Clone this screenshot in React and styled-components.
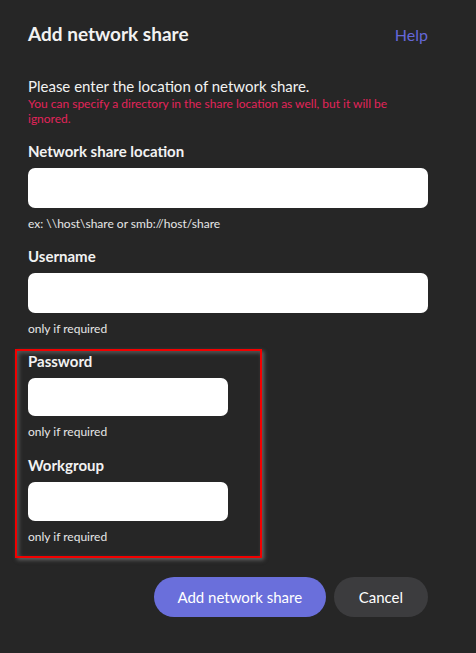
import styled, { createGlobalStyle } from "styled-components"

const GlobalStyle = createGlobalStyle`
  html, body {
    margin: 0;
    background: #262626;
  }
  body {
    font-family: Lato, "Open Sans", sans-serif;
    color: #f2f2f2;
  }
`

const Dialog = styled.div`
  width: 400px;
  padding: 22px 0 0 28px;
  display: flex;
  flex-direction: column;
`

const Header = styled.div`
  display: flex;
  justify-content: space-between;
  align-items: baseline;
`

const Title = styled.h2`
  margin: 0;
  font-size: 19px;
  line-height: 24px;
  font-weight: 700;
`

const HelpLink = styled.a`
  font-size: 16px;
  color: #6567d8;
  cursor: pointer;
`

const Intro = styled.p`
  margin: 31px 0 0;
  font-size: 15px;
  line-height: 19px;
`

const Warning = styled.p`
  margin: 0;
  font-size: 12px;
  line-height: 15px;
  color: #e3245a;
`

const Field = styled.div`
  display: flex;
  flex-direction: column;
  margin-top: ${p => p.$top ?? 15}px;
`

const Label = styled.label`
  font-size: 15px;
  font-weight: 700;
  line-height: 20px;
`

const Input = styled.input`
  box-sizing: border-box;
  margin-top: 7px;
  width: ${p => p.$width || 400}px;
  height: ${p => p.$height || 40}px;
  border: none;
  border-radius: 7px;
  background: #fff;
  outline: none;
`

const Hint = styled.span`
  margin-top: 8px;
  font-size: 12px;
  line-height: 15px;
  color: #e6e6e6;
`

const Highlight = styled.div`
  margin: 13px 0 0 -13px;
  width: 247px;
  box-sizing: border-box;
  padding: 0 32px 12px 11px;
  border: 2px solid #f20000;
  box-shadow: 2px 2px 4px rgba(150, 150, 150, 0.55),
    inset 2px 2px 4px rgba(150, 150, 150, 0.45);
`

const Actions = styled.div`
  display: flex;
  justify-content: flex-end;
  gap: 8px;
  margin-top: 19px;
`

const Button = styled.button`
  height: 40px;
  padding: 0 ${p => p.$pad || 24}px;
  border: none;
  border-radius: 20px;
  font-family: Lato, "Open Sans", sans-serif;
  font-size: 15px;
  color: #fff;
  background: ${p => (p.$primary ? "#6a6fdb" : "#3c3c3e")};
  cursor: pointer;
`

export default function App() {
  return (
    <>
      <GlobalStyle />
      <Dialog>
        <Header>
          <Title>Add network share</Title>
          <HelpLink>Help</HelpLink>
        </Header>
        <Intro>Please enter the location of network share.</Intro>
        <Warning>
          You can specify a directory in the share location as well, but it will be ignored.
        </Warning>
        <Field>
          <Label>Network share location</Label>
          <Input />
          <Hint>ex: \\host\share or smb://host/share</Hint>
        </Field>
        <Field>
          <Label>Username</Label>
          <Input />
          <Hint>only if required</Hint>
        </Field>
        <Highlight>
          <Field $top={0}>
            <Label>Password</Label>
            <Input $width={200} $height={38} />
            <Hint>only if required</Hint>
          </Field>
          <Field $top={16}>
            <Label>Workgroup</Label>
            <Input $width={200} $height={39} />
            <Hint>only if required</Hint>
          </Field>
        </Highlight>
        <Actions>
          <Button $primary $pad={23.5}>Add network share</Button>
          <Button $pad={25}>Cancel</Button>
        </Actions>
      </Dialog>
    </>
  )
}
